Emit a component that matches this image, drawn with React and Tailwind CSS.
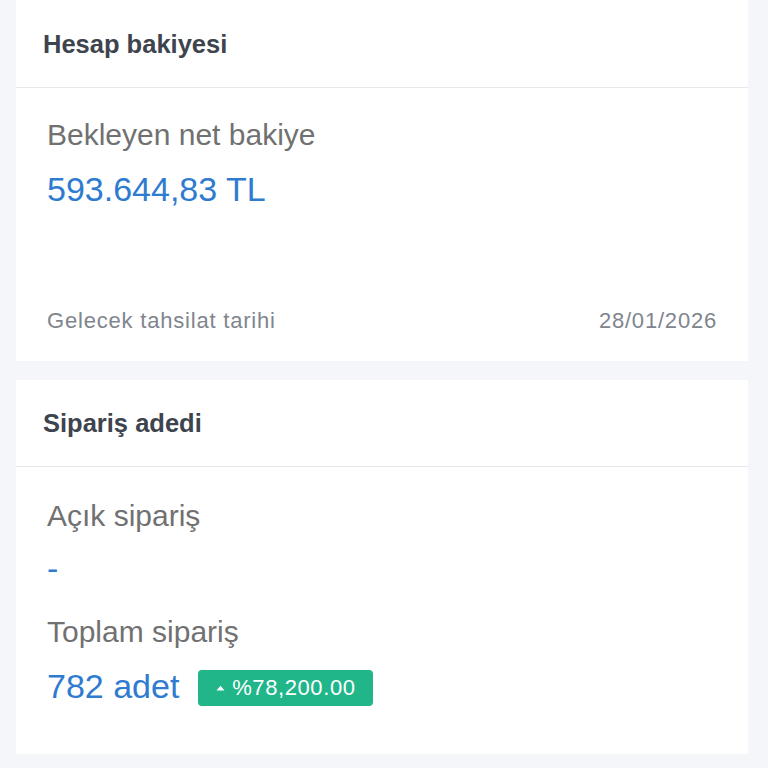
import React from "react";

export default function App() {
  const font = { fontFamily: '"Liberation Sans", Arial, sans-serif' };
  return (
    <div className="w-[768px] h-[768px] bg-[#f4f6f9] overflow-hidden pl-4 pr-5 flex flex-col gap-[19px]" style={font}>
      {/* Card 1 */}
      <div className="bg-white flex flex-col">
        <div className="h-[88px] flex items-center pl-[27px] border-b border-[#e6e8ec]">
          <span className="text-[25.5px] leading-[30px] font-bold text-[#3e444e]">Hesap bakiyesi</span>
        </div>
        <div className="flex flex-col px-[31px] pt-[29px] pb-[26px]">
          <div className="text-[30px] leading-[36px] text-[#717171]">Bekleyen net bakiye</div>
          <div className="mt-[16px] text-[34px] leading-[40px] text-[#2f7bd0]">593.644,83 TL</div>
          <div className="mt-[98px] flex justify-between items-center text-[22px] leading-[28px] tracking-[0.8px] text-[#80858d]">
            <span>Gelecek tahsilat tarihi</span>
            <span>28/01/2026</span>
          </div>
        </div>
      </div>
      {/* Card 2 */}
      <div className="bg-white flex flex-col">
        <div className="h-[87px] flex items-center pl-[27px] border-b border-[#e6e8ec]">
          <span className="text-[25.5px] leading-[30px] font-bold text-[#3e444e]">Sipariş adedi</span>
        </div>
        <div className="flex flex-col px-[31px] pt-[31px] pb-[48px]">
          <div className="text-[30px] leading-[36px] text-[#717171]">Açık sipariş</div>
          <div className="mt-[14px] text-[34px] leading-[40px] text-[#2f7bd0]">-</div>
          <div className="mt-[26px] text-[30px] leading-[36px] text-[#717171]">Toplam sipariş</div>
          <div className="mt-[16px] flex items-center gap-[19px]">
            <span className="text-[34px] leading-[40px] text-[#2f7bd0]">782 adet</span>
            <span className="h-[36px] w-[175px] mt-[4px] rounded-[4px] bg-[#20b68a] flex items-center justify-center gap-[7px] text-white">
              <svg width="9" height="6" viewBox="0 0 9 6"><path d="M0.5 5.5 L4.5 0.8 L8.5 5.5 Z" fill="white" /></svg>
              <span className="text-[22px] leading-[26px] tracking-[0.6px]">%78,200.00</span>
            </span>
          </div>
        </div>
      </div>
    </div>
  );
}
